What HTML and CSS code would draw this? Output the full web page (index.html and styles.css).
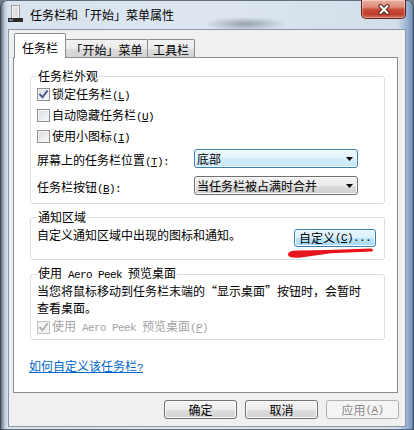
FILE: index.html
```html
<!DOCTYPE html>
<html lang="zh-CN">
<head>
<meta charset="utf-8">
<title>任务栏和「开始」菜单属性</title>
<link rel="stylesheet" href="styles.css">
</head>
<body>
<div class="window">
  <div class="titlebar">
    <svg class="app-icon" width="15" height="18" viewBox="0 0 15 18">
      <rect x="3.5" y="0.5" width="8" height="13" fill="#f6f6f6" stroke="#9b9b9b"/>
      <rect x="5" y="2" width="5" height="10" fill="#e0e0e0"/>
      <rect x="0" y="13" width="15" height="4" fill="#2a2a2a"/>
      <rect x="1" y="14" width="4" height="2" fill="#6f8090"/>
    </svg>
    <span class="title">任务栏和「开始」菜单属性</span>
    <div class="close">
      <svg width="14" height="11" viewBox="0 0 14 11">
        <path d="M3.5 2 L10.5 9 M10.5 2 L3.5 9" stroke="#4a1c14" stroke-width="4" stroke-linecap="round"/>
        <path d="M3.5 2 L10.5 9 M10.5 2 L3.5 9" stroke="#ffffff" stroke-width="2.2" stroke-linecap="round"/>
      </svg>
    </div>
  </div>

  <div class="client">
    <div class="tabs">
      <div class="tab active">任务栏</div>
      <div class="tab t2">「开始」菜单</div>
      <div class="tab t3">工具栏</div>
    </div>

    <div class="panel">
      <fieldset class="group g1">
        <legend>任务栏外观</legend>
        <label class="check">
          <span class="box"><svg width="11" height="11" viewBox="0 0 11 11"><path d="M2 5.5 L4.5 8.3 L9 2.2" class="tick"/></svg></span>
          <span>锁定任务栏<span class="m">(<u>L</u>)</span></span>
        </label>
        <label class="check">
          <span class="box"></span>
          <span>自动隐藏任务栏<span class="m">(<u>U</u>)</span></span>
        </label>
        <label class="check">
          <span class="box"></span>
          <span>使用小图标<span class="m">(<u>I</u>)</span></span>
        </label>
        <div class="combo-row first">
          <span class="lbl">屏幕上的任务栏位置<span class="m">(<u>T</u>):</span></span>
          <div class="combo hot"><span>底部</span><svg class="arrow" width="7" height="4" viewBox="0 0 7 4"><path d="M0 0 H7 L3.5 4 Z" fill="#000"/></svg></div>
        </div>
        <div class="combo-row second">
          <span class="lbl">任务栏按钮<span class="m">(<u>B</u>):</span></span>
          <div class="combo"><span>当任务栏被占满时合并</span><svg class="arrow" width="7" height="4" viewBox="0 0 7 4"><path d="M0 0 H7 L3.5 4 Z" fill="#000"/></svg></div>
        </div>
      </fieldset>

      <fieldset class="group g2">
        <legend>通知区域</legend>
        <div class="notify-row">
          <span class="notify-text">自定义通知区域中出现的图标和通知。</span>
          <div class="cust-wrap">
            <div class="btn focus">自定义<span class="m">(<u>C</u>)...</span></div>
            <svg class="scribble" width="88" height="12" viewBox="0 0 88 12">
              <path d="M1 7.5 Q1 3.5 10 3.5 L40 3 L84 1.6 Q87.5 2.6 85 4.4 L44 6.2 L14 10.6 Q1 11.6 1 7.5 Z" fill="#e8141c"/>
            </svg>
          </div>
        </div>
      </fieldset>

      <fieldset class="group g3">
        <legend>使用<span class="m"> Aero Peek </span>预览桌面</legend>
        <p class="peek-text">当您将鼠标移动到任务栏末端的“显示桌面”按钮时，会暂时</p>
        <p class="peek-text">查看桌面。</p>
        <label class="check disabled">
          <span class="box"><svg width="11" height="11" viewBox="0 0 11 11"><path d="M2 5.5 L4.5 8.3 L9 2.2" class="tick"/></svg></span>
          <span>使用<span class="m"> Aero Peek </span>预览桌面<span class="m">(<u>P</u>)</span></span>
        </label>
      </fieldset>

      <a class="help-link" href="#">如何自定义该任务栏<span class="m">?</span></a>
    </div>

    <div class="buttons">
      <div class="btn">确定</div>
      <div class="btn">取消</div>
      <div class="btn disabled">应用<span class="m">(<u>A</u>)</span></div>
    </div>
  </div>
</div>
</body>
</html>
```

FILE: styles.css
```css
* { box-sizing: border-box; }

html, body {
  margin: 0;
  padding: 0;
}

body {
  width: 414px;
  height: 430px;
  overflow: hidden;
  background: #6f7d8d;
  font-family: "Noto Sans CJK SC", "Noto Sans", sans-serif;
  font-size: 12px;
  color: #000;
}

.m {
  font-family: "Liberation Mono", "DejaVu Sans Mono", monospace;
  font-size: 11px;
  letter-spacing: -0.6px;
  white-space: pre;
}

/* window frame */
.window {
  width: 414px;
  height: 430px;
  display: flex;
  flex-direction: column;
  border-radius: 7px 7px 0 0;
  background:
    radial-gradient(ellipse 42px 7px at 245px 24px, rgba(70, 80, 95, 0.45), rgba(70, 80, 95, 0) 100%),
    linear-gradient(to right, #55616e 0px, #7c8998 2px, #c2cfdd 5px, #d9e3ee 8px, #dde6f0 50%, #d3deea 96%, #abc2dc 97.5%, #7f9dc2 99.3%, #4e6684 100%);
  box-shadow: inset 0 0 0 1px rgba(45, 60, 80, 0.7);
}

.titlebar {
  height: 29px;
  flex: none;
  display: flex;
  align-items: flex-start;
  padding-left: 8px;
}

.app-icon {
  flex: none;
  margin-top: 5px;
}

.title {
  margin-left: 7px;
  margin-top: 7px;
  line-height: 16px;
  font-size: 12px;
  color: #000;
}

.close {
  margin-left: auto;
  margin-right: 8px;
  width: 45px;
  height: 19px;
  display: flex;
  align-items: center;
  justify-content: center;
  border: 1px solid #5e2018;
  border-top: none;
  border-radius: 0 0 5px 5px;
  background: linear-gradient(#eab0a2 0%, #dc8a78 40%, #c9503d 52%, #bf3a28 78%, #d7705a 100%);
  box-shadow: inset 0 0 0 1px rgba(255, 255, 255, 0.35);
}

/* client area */
.client {
  flex: 1;
  margin: 0 8px 7px 8px;
  border: 1px solid #8a97a6;
  background: #f0f0f0;
  display: flex;
  flex-direction: column;
  padding: 3px 0 7px 0;
}

.tabs {
  display: flex;
  align-items: flex-end;
  height: 25px;
  margin-bottom: -1px;
  padding-left: 5px;
}

.tab {
  height: 18px;
  margin-bottom: 1px;
  border: 1px solid #898c95;
  border-bottom: none;
  border-radius: 2px 2px 0 0;
  background: linear-gradient(#f3f3f3 0%, #ebebeb 50%, #dddddd 50%, #d3d3d3 100%);
  line-height: 14px;
  padding-top: 3px;
  text-align: center;
}

.tab.active {
  width: 52px;
  height: 25px;
  margin-bottom: 0;
  padding-top: 7px;
  background: #fff;
  position: relative;
  z-index: 2;
}

.tab.t2 {
  width: 83px;
  margin-left: -1px;
}

.tab.t3 {
  width: 48px;
  margin-left: -1px;
}

.panel {
  margin: 0 7px 0 4px;
  border: 1px solid #898c95;
  background: #fff;
  padding: 11px 12px 17px 16px;
}

/* group boxes */
.group {
  margin: 0;
  border: 1px solid #d5dfe5;
  border-radius: 3px;
  padding: 0 0 0 6px;
  min-width: 0;
}

.group legend {
  padding: 0 1px;
  line-height: 14px;
}

.g1 { padding-top: 1px; padding-bottom: 9px; }
.g2 { margin-top: 6px; padding-top: 4px; padding-bottom: 12px; }
.g3 { margin-top: 6px; padding-top: 0; padding-bottom: 5px; }

.check {
  display: flex;
  align-items: center;
  height: 21px;
  line-height: 14px;
}

.box {
  flex: none;
  width: 13px;
  height: 13px;
  margin-right: 2px;
  border: 1px solid #8e8f8f;
  background: linear-gradient(135deg, #d3d7dc 0%, #eceef0 55%, #fafafa 100%);
  box-shadow: inset 0 0 0 1px #f6f6f6;
}

.box svg { display: block; }

.tick {
  fill: none;
  stroke: #445a93;
  stroke-width: 1.9;
  stroke-linecap: square;
}

.check.disabled {
  height: 14px;
  margin-top: 4px;
  color: #a3a3a3;
}

.check.disabled .box {
  border-color: #c0c0c0;
  background: #f4f4f4;
  box-shadow: none;
}

.check.disabled .tick { stroke: #b0b0b0; }

.combo-row {
  display: grid;
  grid-template-columns: 157px 164px;
  align-items: center;
  height: 19px;
}

.combo-row.first { margin-top: 1px; }
.combo-row.second { margin-top: 8px; }

.lbl {
  line-height: 14px;
  margin-top: 5px;
}

.combo {
  height: 19px;
  display: flex;
  align-items: center;
  padding-left: 2px;
  border: 1px solid #707070;
  border-radius: 3px;
  line-height: 14px;
  background: linear-gradient(#f2f2f2 0%, #ebebeb 50%, #dddddd 50%, #cfcfcf 100%);
  box-shadow: inset 0 0 0 1px #fbfbfb;
}

.combo.hot {
  border-color: #3c7fb1;
  background: linear-gradient(#eef8fe 0%, #e3f3fd 50%, #d3edfc 50%, #c6e7fb 100%);
  box-shadow: inset 0 0 0 1px #f8fcff;
}

.arrow {
  margin-left: auto;
  margin-right: 4px;
  flex: none;
}

/* notification */
.notify-row {
  display: flex;
  align-items: flex-start;
  justify-content: space-between;
}

.notify-text { line-height: 14px; }

.cust-wrap {
  position: relative;
  margin-top: 1px;
  margin-right: 8px;
}

.scribble {
  position: absolute;
  left: -7px;
  top: 100%;
}

/* buttons */
.btn {
  width: 73px;
  height: 19px;
  display: flex;
  align-items: center;
  justify-content: center;
  line-height: 14px;
  border: 1px solid #707070;
  border-radius: 3px;
  background: linear-gradient(#f4f4f4 0%, #ececec 50%, #dedede 50%, #d2d2d2 100%);
  box-shadow: inset 0 0 0 1px #fcfcfc;
}

.btn.focus {
  width: 82px;
  height: 18px;
  border-color: #3c7fb1;
  background: linear-gradient(#eaf6fd 0%, #d9f0fc 50%, #bee6fd 50%, #a7d9f5 100%);
  box-shadow: inset 0 0 0 1px #f4fbff;
}

.btn.disabled {
  border-color: #adb2b5;
  background: #f4f4f4;
  color: #8a8a8a;
  box-shadow: none;
}

.peek-text {
  margin: 0;
  line-height: 17px;
  white-space: nowrap;
}

.help-link {
  display: block;
  margin-top: 19px;
  margin-left: -1px;
  width: max-content;
  line-height: 14px;
  color: #0066cc;
  text-decoration: underline;
}

.buttons {
  display: flex;
  justify-content: flex-end;
  gap: 8px;
  margin-top: 7px;
  padding-right: 6px;
}
```
